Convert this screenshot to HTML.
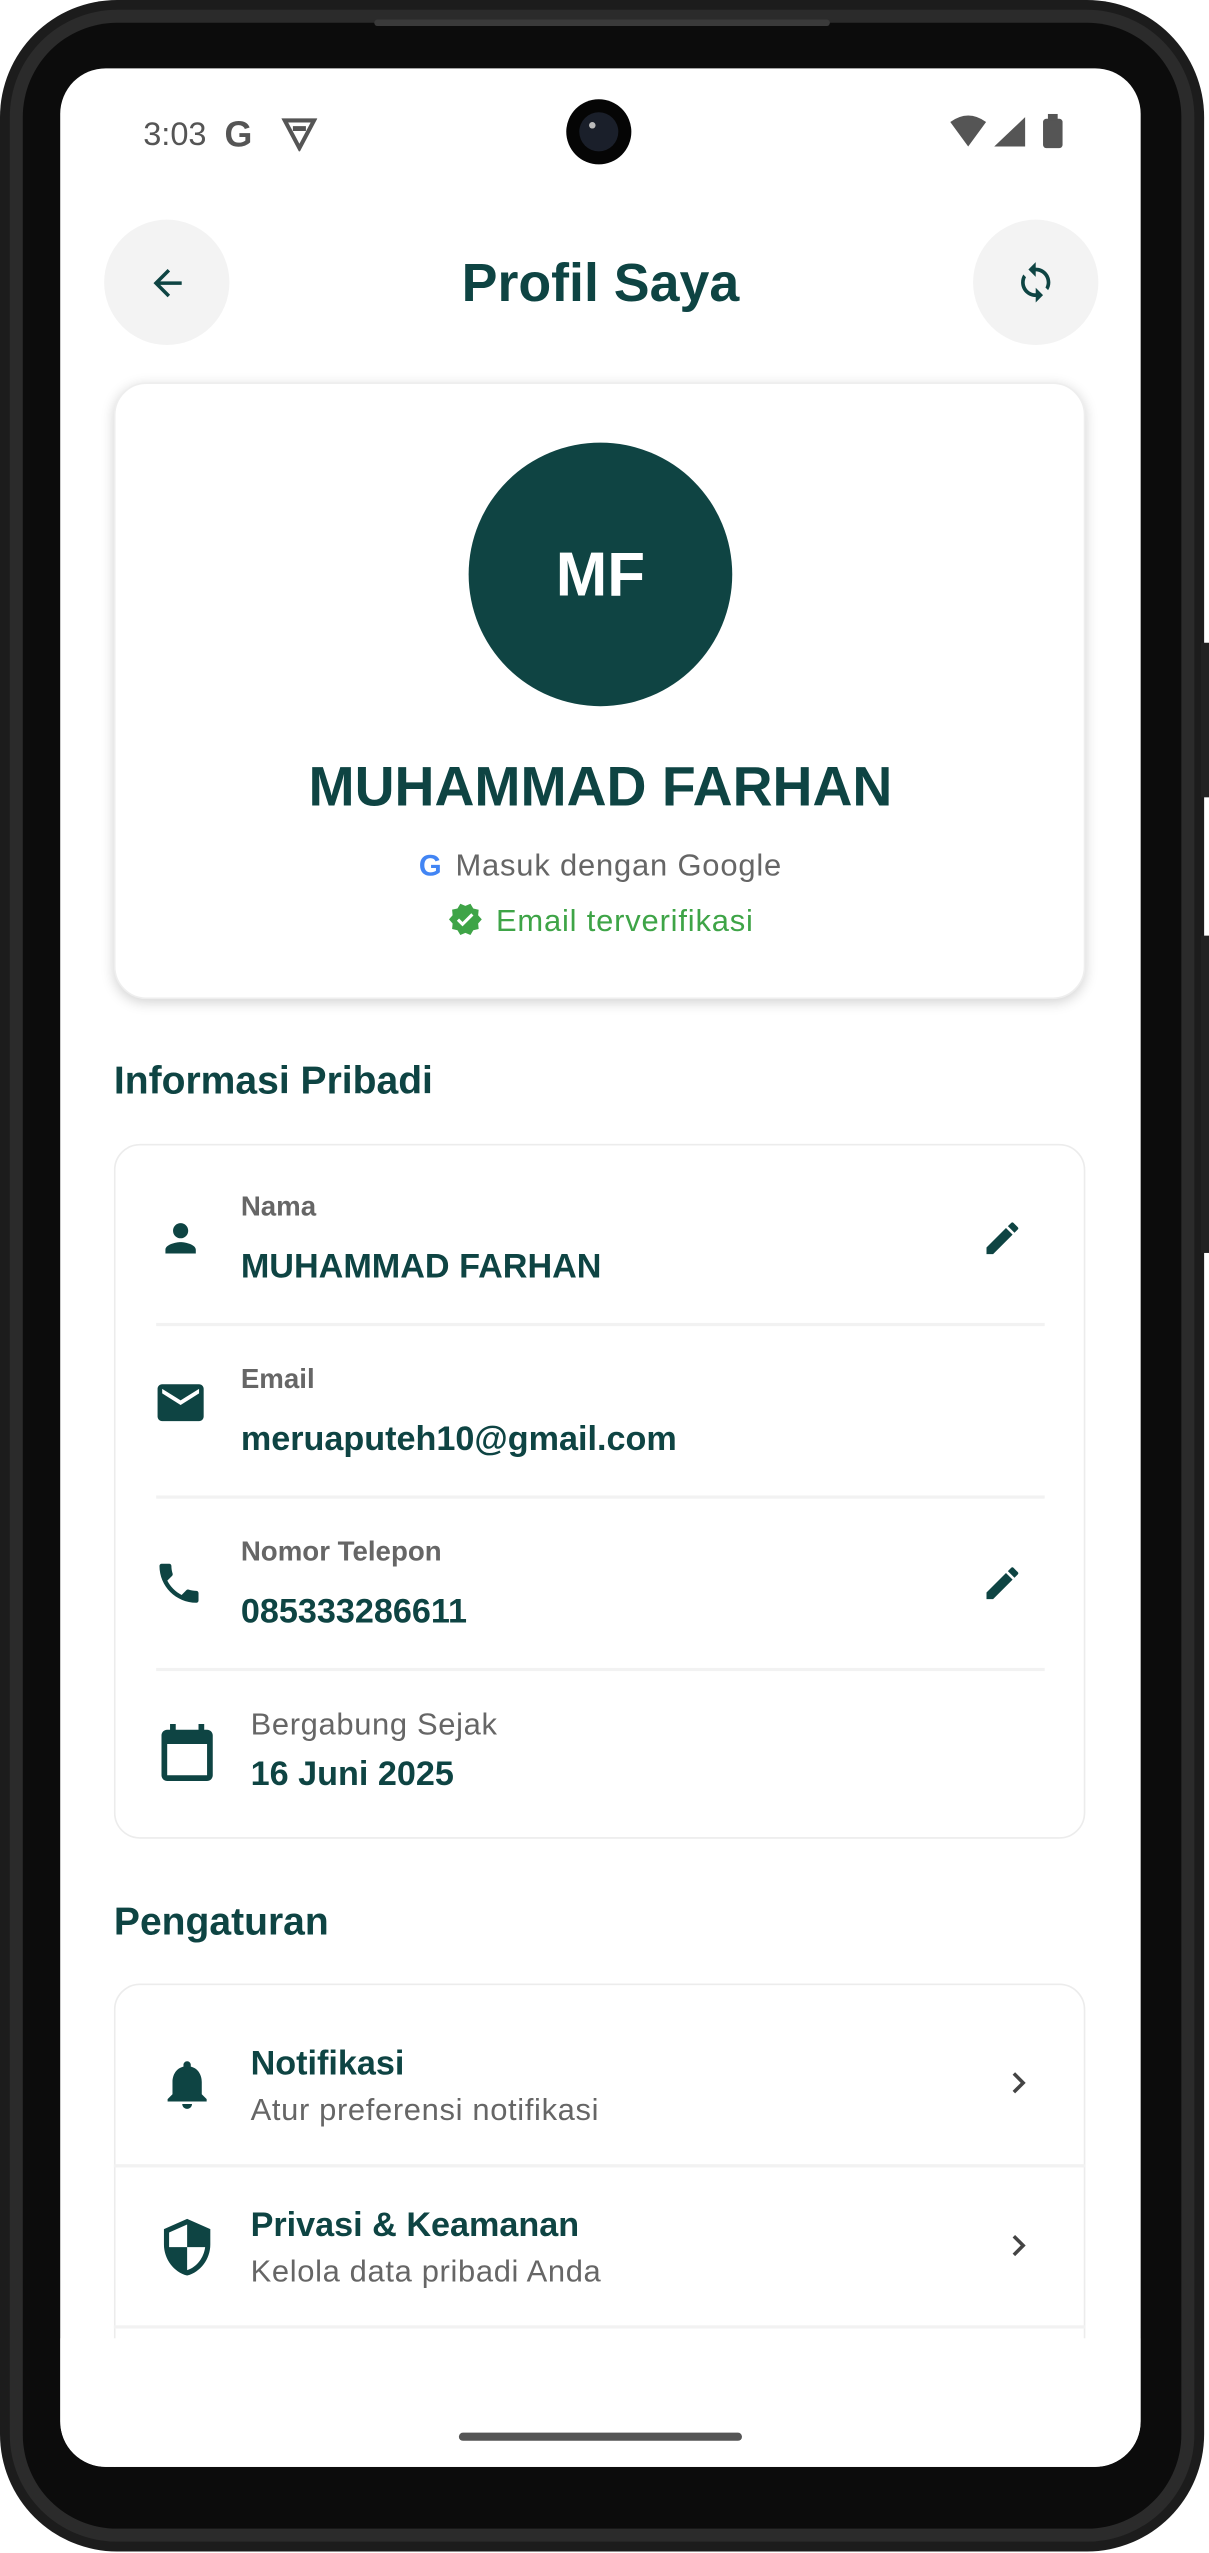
<!DOCTYPE html>
<html><head><meta charset="utf-8">
<style>
html,body{margin:0;padding:0;background:#fff;}
body{width:1209px;height:2553px;overflow:hidden;position:relative;font-family:"Liberation Sans",sans-serif;}
#w{position:absolute;left:0;top:0;width:743px;height:1569px;transform:scale(1.6272);transform-origin:0 0;}
.a{position:absolute;}
.t{transform:translateY(2px);}
.dk{color:#0e4443;}
.lbl{font-size:17px;color:#666;font-weight:bold;}
.val{font-size:21px;color:#0e4443;font-weight:bold;}
</style></head><body>
<div id="w">
 <div class="a" style="left:0;top:0;width:740px;height:1568px;border-radius:72px;background:#1c1c1c;"></div>
 <div class="a" style="left:6px;top:6px;width:728px;height:1556px;border-radius:66px;background:#2b2b2b;"></div>
 <div class="a" style="left:14px;top:14px;width:712px;height:1540px;border-radius:58px;background:#0c0c0c;"></div>
 <div class="a" style="left:230px;top:12px;width:280px;height:4px;background:#3a3a3a;border-radius:2px;"></div>
 <div class="a" style="left:738px;top:395px;width:5px;height:95px;background:#222;"></div>
 <div class="a" style="left:738px;top:575px;width:5px;height:195px;background:#222;"></div>
 <div class="a" style="left:37px;top:42px;width:664px;height:1474px;border-radius:28px;background:#fff;overflow:hidden;">
  <div class="a" style="left:0;top:0;width:664px;height:1474px;">
   <div class="a t" style="left:51px;top:28px;font-size:20px;color:#555;">3:03</div>
   <div class="a t" style="left:101px;top:26px;font-size:22px;color:#555;font-weight:bold;">G</div>
   <svg class="a" style="left:136px;top:29px" width="22" height="22" viewBox="0 0 22 22"><path d="M2 3h18L11 20z" fill="none" stroke="#555" stroke-width="2.5"/><path d="M7 8h8" stroke="#555" stroke-width="3"/></svg>
   <div class="a" style="left:311px;top:19px;width:40px;height:40px;border-radius:50%;background:#050505;"></div>
   <div class="a" style="left:319px;top:27px;width:24px;height:24px;border-radius:50%;background:#1a1f2a;"></div>
   <div class="a" style="left:325px;top:33px;width:4px;height:4px;border-radius:50%;background:#bbb;"></div>
   <svg class="a" style="left:546px;top:28px" width="80" height="22" viewBox="0 0 80 22"><path d="M1 5Q12 -3 23 5L12 20z" fill="#555"/><path d="M28 20L47 2V20z" fill="#555"/><rect x="58" y="3" width="12" height="18" rx="2" fill="#555"/><rect x="61" y="0" width="6" height="4" fill="#555"/></svg>
   <div class="a" style="left:27px;top:93px;width:77px;height:77px;border-radius:50%;background:#f3f3f3;"></div>
   <svg class="a" style="left:53px;top:119px" width="26" height="26" viewBox="0 0 24 24"><path d="M20 11H7.83l5.59-5.59L12 4l-8 8 8 8 1.41-1.41L7.83 13H20v-2z" fill="#0e4443"/></svg>
   <div class="a dk t" style="left:0;width:664px;top:111px;text-align:center;font-size:33px;font-weight:bold;">Profil Saya</div>
   <div class="a" style="left:561px;top:93px;width:77px;height:77px;border-radius:50%;background:#f3f3f3;"></div>
   <svg class="a" style="left:586px;top:118px" width="27" height="27" viewBox="0 0 24 24"><path d="M12 4V1L8 5l4 4V6c3.31 0 6 2.69 6 6 0 1.010-.25 1.97-.7 2.8l1.46 1.46C19.54 15.03 20 13.57 20 12c0-4.42-3.58-8-8-8zm0 14c-3.31 0-6-2.69-6-6 0-1.01.25-1.97.7-2.8L5.24 7.74C4.46 8.97 4 10.43 4 12c0 4.42 3.58 8 8 8v3l4-4-4-4v3z" fill="#0e4443"/></svg>
   <div class="a" style="left:33px;top:193px;width:597px;height:379px;border-radius:20px;background:#fff;box-shadow:0 2px 8px rgba(0,0,0,.18);border:1px solid #eee;box-sizing:border-box;"></div>
   <div class="a" style="left:251px;top:230px;width:162px;height:162px;border-radius:50%;background:#0f4443;color:#fff;font-size:38px;font-weight:bold;text-align:center;line-height:164px;">MF</div>
   <div class="a dk t" style="left:0;width:664px;top:421px;text-align:center;font-size:34px;font-weight:bold;">MUHAMMAD FARHAN</div>
   <div class="a t" style="left:0;width:664px;top:478px;text-align:center;font-size:19px;color:#666;letter-spacing:0.5px;"><span style="color:#4285f4;font-weight:bold;font-size:18px;margin-right:8px;">G</span>Masuk dengan Google</div>
   <div class="a t" style="left:0;width:664px;top:510px;text-align:center;font-size:19px;color:#3ea447;letter-spacing:0.5px;"><svg width="22" height="22" viewBox="0 0 24 24" style="vertical-align:-4px;margin-right:8px"><path d="M23 12l-2.44-2.79.34-3.690-3.61-.82-1.89-3.2L12 2.96 8.6 1.5 6.71 4.69 3.1 5.5l.34 3.7L1 12l2.44 2.79-.34 3.7 3.61.82L8.6 22.5l3.4-1.47 3.4 1.46 1.89-3.19 3.61-.82-.34-3.69L23 12zm-12.91 4.72l-3.8-3.81 1.48-1.48 2.32 2.33 5.85-5.87 1.48 1.48-7.33 7.35z" fill="#3ea447"/></svg>Email terverifikasi</div>
   <div class="a dk t" style="left:33px;top:607px;font-size:24px;font-weight:bold;">Informasi Pribadi</div>
   <div class="a" style="left:33px;top:661px;width:597px;height:427px;border-radius:16px;border:1px solid #ececec;box-sizing:border-box;"></div>
   <div class="a" style="left:59px;top:771px;width:546px;height:2px;background:#f2f2f2;"></div>
   <div class="a" style="left:59px;top:877px;width:546px;height:2px;background:#f2f2f2;"></div>
   <div class="a" style="left:59px;top:983px;width:546px;height:2px;background:#f2f2f2;"></div>
   <svg class="a" style="left:60px;top:705px" width="28" height="28" viewBox="0 0 24 24"><path d="M12 12c2.21 0 4-1.79 4-4s-1.79-4-4-4-4 1.79-4 4 1.79 4 4 4zm0 2c-2.67 0-8 1.34-8 4v2h16v-2c0-2.66-5.330-4-8-4z" fill="#0e4443"/></svg>
   <div class="a lbl t" style="left:111px;top:688px;">Nama</div>
   <div class="a val t" style="left:111px;top:723px;">MUHAMMAD FARHAN</div>
   <svg class="a" style="left:566px;top:706px" width="26" height="26" viewBox="0 0 24 24"><path d="M3 17.25V21h3.75L17.81 9.94l-3.75-3.75L3 17.25zM20.71 7.04a1 1 0 000-1.41l-2.34-2.34a1 1 0 00-1.41 0l-1.83 1.83 3.75 3.75 1.83-1.83z" fill="#0e4443"/></svg>
   <svg class="a" style="left:57px;top:803px" width="34" height="34" viewBox="0 0 24 24"><path d="M20 4H4c-1.1 0-2 .9-2 2v12c0 1.1.9 2 2 2h16c1.1 0 2-.9 2-2V6c0-1.1-.9-2-2-2zm0 4l-8 5-8-5V6l8 5 8-5v2z" fill="#0e4443"/></svg>
   <div class="a lbl t" style="left:111px;top:794px;">Email</div>
   <div class="a val t" style="left:111px;top:829px;">meruaputeh10@gmail.com</div>
   <svg class="a" style="left:57px;top:915px" width="32" height="32" viewBox="0 0 24 24"><path d="M6.62 10.79c1.44 2.83 3.76 5.14 6.59 6.59l2.2-2.2c.27-.27.67-.36 1.02-.24 1.12.37 2.33.57 3.57.57.55 0 1 .45 1 1V20c0 .55-.45 1-1 1-9.39 0-17-7.61-17-17 0-.55.45-1 1-1h3.5c.55 0 1 .45 1 1 0 1.25.2 2.45.57 3.57.11.35.03.74-.25 1.02l-2.2 2.2z" fill="#0e4443"/></svg>
   <div class="a lbl t" style="left:111px;top:900px;">Nomor Telepon</div>
   <div class="a val t" style="left:111px;top:935px;">085333286611</div>
   <svg class="a" style="left:566px;top:918px" width="26" height="26" viewBox="0 0 24 24"><path d="M3 17.25V21h3.75L17.81 9.94l-3.75-3.75L3 17.25zM20.71 7.04a1 1 0 000-1.41l-2.34-2.34a1 1 0 00-1.41 0l-1.83 1.83 3.75 3.75 1.83-1.83z" fill="#0e4443"/></svg>
   <svg class="a" style="left:57px;top:1014px" width="42" height="42" viewBox="0 0 24 24"><path d="M19 4h-1V2h-2v2H8V2H6v2H5c-1.11 0-2 .9-2 2v14c0 1.1.89 2 2 2h14c1.1 0 2-.9 2-2V6c0-1.1-.9-2-2-2zm0 16H5V9h14v11z" fill="#0e4443"/></svg>
   <div class="a t" style="left:117px;top:1006px;font-size:19px;color:#666;letter-spacing:0.4px;">Bergabung Sejak</div>
   <div class="a val t" style="left:117px;top:1035px;">16 Juni 2025</div>
   <div class="a dk t" style="left:33px;top:1124px;font-size:24px;font-weight:bold;">Pengaturan</div>
   <div class="a" style="left:33px;top:1177px;width:597px;height:400px;border-radius:16px;border:1px solid #ececec;box-sizing:border-box;"></div>
   <div class="a" style="left:33px;top:1288px;width:597px;height:2px;background:#f2f2f2;"></div>
   <div class="a" style="left:33px;top:1387px;width:597px;height:2px;background:#f2f2f2;"></div>
   <svg class="a" style="left:60px;top:1221px" width="36" height="36" viewBox="0 0 24 24"><path d="M12 22c1.1 0 2-.9 2-2h-4c0 1.1.89 2 2 2zm6-6v-5c0-3.07-1.64-5.64-4.5-6.32V4c0-.83-.67-1.5-1.5-1.5s-1.5.67-1.5 1.5v.68C7.63 5.36 6 7.92 6 11v5l-2 2v1h16v-1l-2-2z" fill="#0e4443"/></svg>
   <div class="a t" style="left:117px;top:1213px;font-size:21px;font-weight:bold;color:#0e4443;">Notifikasi</div>
   <div class="a t" style="left:117px;top:1243px;font-size:19px;color:#666;letter-spacing:0.4px;">Atur preferensi notifikasi</div>
   <svg class="a" style="left:576px;top:1225px" width="26" height="26" viewBox="0 0 24 24"><path d="M10 6L8.59 7.41 13.17 12l-4.58 4.59L10 18l6-6z" fill="#444"/></svg>
   <svg class="a" style="left:59px;top:1320px" width="38" height="38" viewBox="0 0 24 24"><path d="M12 1L3 5v6c0 5.55 3.84 10.74 9 12 5.16-1.26 9-6.45 9-12V5l-9-4zm0 10.99h7c-.53 4.12-3.28 7.79-7 8.94V12H5V6.3l7-3.11v8.8z" fill="#0e4443"/></svg>
   <div class="a t" style="left:117px;top:1312px;font-size:21px;font-weight:bold;color:#0e4443;">Privasi &amp; Keamanan</div>
   <div class="a t" style="left:117px;top:1342px;font-size:19px;color:#666;letter-spacing:0.4px;">Kelola data pribadi Anda</div>
   <svg class="a" style="left:576px;top:1325px" width="26" height="26" viewBox="0 0 24 24"><path d="M10 6L8.59 7.41 13.17 12l-4.58 4.59L10 18l6-6z" fill="#444"/></svg>
   <div class="a" style="left:0;top:1395px;width:664px;height:100px;background:#fff;"></div>
   <div class="a" style="left:245px;top:1453px;width:174px;height:5px;border-radius:3px;background:#555;"></div>
  </div>
 </div>
</div>
</body></html>
